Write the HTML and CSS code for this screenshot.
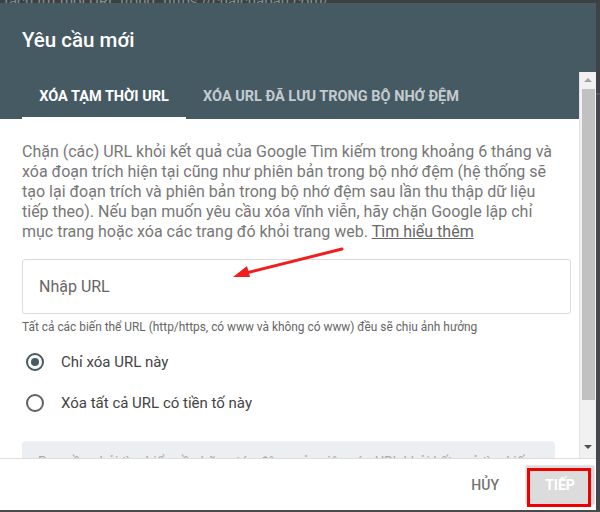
FILE: index.html
```html
<!DOCTYPE html>
<html lang="vi">
<head>
<meta charset="utf-8">
<title>Yêu cầu mới</title>
<link rel="stylesheet" href="styles.css">
</head>
<body>
<div class="backdrop-text">tách trừ mọi URL trong "https://cuaicuaban.com/</div>
<div class="stage">
  <div class="dialog">
    <div class="title">Yêu cầu mới</div>
    <div class="main">
      <div class="scroll">
        <div class="tabs">
          <div class="tab active">XÓA TẠM THỜI URL</div>
          <div class="tab">XÓA URL ĐÃ LƯU TRONG BỘ NHỚ ĐỆM</div>
        </div>
        <div class="content">
          <p class="desc">Chặn (các) URL khỏi kết quả của Google Tìm kiếm trong khoảng 6 tháng và<br>xóa đoạn trích hiện tại cũng như phiên bản trong bộ nhớ đệm (hệ thống sẽ<br>tạo lại đoạn trích và phiên bản trong bộ nhớ đệm sau lần thu thập dữ liệu<br>tiếp theo). Nếu bạn muốn yêu cầu xóa vĩnh viễn, hãy chặn Google lập chỉ<br>mục trang hoặc xóa các trang đó khỏi trang web. <a class="link">Tìm hiểu thêm</a></p>
          <div class="input">Nhập URL</div>
          <div class="hint">Tất cả các biến thể URL (http/https, có www và không có www) đều sẽ chịu ảnh hưởng</div>
          <div class="radios">
            <div class="radio-row"><span class="radio checked"></span><span class="radio-label">Chỉ xóa URL này</span></div>
            <div class="radio-row"><span class="radio"></span><span class="radio-label">Xóa tất cả URL có tiền tố này</span></div>
          </div>
          <div class="info">Bạn cần phải tìm hiểu về những tác động của việc xóa URL khỏi kết quả tìm kiếm</div>
        </div>
      </div>
      <div class="scrollbar">
        <div class="sb-up"></div>
        <div class="sb-thumb"></div>
        <div class="sb-down"></div>
      </div>
    </div>
    <div class="footer">
      <button class="btn cancel">HỦY</button>
      <button class="btn next">TIẾP</button>
    </div>
  </div>
  <div class="side"></div>
</div>
<div class="bottom-edge"></div>
<svg class="arrow" width="120" height="40" viewBox="0 0 120 40">
  <line x1="112" y1="7" x2="12" y2="32" stroke="#f21d1d" stroke-width="3" stroke-linecap="round"/>
  <polygon points="3,35 17,24 20,35" fill="#f21d1d"/>
</svg>
<div class="highlight"></div>
</body>
</html>
```
FILE: styles.css
```css
html, body {
  margin: 0;
  padding: 0;
}
body {
  width: 600px;
  height: 512px;
  overflow: hidden;
  background: #3c4043;
  font-family: Roboto, "Noto Sans", "DejaVu Sans", sans-serif;
  position: relative;
}
.backdrop-text {
  height: 3px;
  overflow: hidden;
  color: #8a8e92;
  font-size: 15px;
  line-height: 3px;
  padding-left: 4px;
  background: #3c4043;
  white-space: nowrap;
}
.stage {
  display: flex;
  height: 507px;
}
.dialog {
  width: 596px;
  height: 507px;
  background: #fff;
  display: flex;
  flex-direction: column;
  overflow: hidden;
}
.side {
  flex: 1;
  background: linear-gradient(#3f4347 0 90px, #55595d 90px 92px, #44484c 92px);
}
.title {
  height: 69px;
  background: #465a64;
  color: #fff;
  font-size: 20.5px;
  font-weight: 500;
  padding-left: 22px;
  box-sizing: border-box;
  padding-top: 25px;
  line-height: 24px;
}
.main {
  display: flex;
  height: 386px;
}
.scroll {
  flex: 1;
  overflow: hidden;
}
.tabs {
  height: 47px;
  background: #465a64;
  display: flex;
  padding-left: 22px;
  box-sizing: border-box;
}
.tab {
  font-size: 14.5px;
  font-weight: 700;
  color: #c3cbcf;
  padding: 16px 16px 0 17px;
  box-sizing: border-box;
  height: 47px;
  line-height: 17px;
  white-space: nowrap;
}
.tab.active {
  color: #fff;
  border-bottom: 2px solid #fff;
  height: 47px;
  width: 164px;
  text-align: center;
  padding-left: 0;
  padding-right: 0;
}
.content {
  padding: 23px 8px 0 22px;
}
.desc {
  margin: 0;
  font-size: 16px;
  line-height: 20px;
  color: #777;
  white-space: nowrap;
}
.link {
  color: #666;
  text-decoration: underline;
}
.input {
  margin-top: 17px;
  height: 55px;
  border: 1px solid #dadce0;
  border-radius: 3px;
  box-sizing: border-box;
  padding-left: 16px;
  font-size: 16px;
  color: #666;
  line-height: 53px;
}
.hint {
  margin-top: 5px;
  font-size: 11.9px;
  line-height: 16px;
  color: #666;
  white-space: nowrap;
}
.radios {
  margin-top: 6px;
}
.radio-row {
  height: 41px;
  display: flex;
  align-items: center;
}
.radio {
  width: 18px;
  height: 18px;
  border: 2px solid #616161;
  border-radius: 50%;
  box-sizing: border-box;
  margin-left: 4px;
  position: relative;
}
.radio.checked {
  border-color: #465a64;
}
.radio.checked::after {
  content: "";
  position: absolute;
  left: 3px;
  top: 3px;
  width: 8px;
  height: 8px;
  border-radius: 50%;
  background: #465a64;
}
.radio-label {
  margin-left: 17px;
  font-size: 15px;
  color: #444;
}
.info {
  margin-top: 18px;
  margin-right: 16px;
  height: 60px;
  background: #eceff1;
  border-radius: 4px;
  padding: 13px 16px 0;
  box-sizing: border-box;
  font-size: 14px;
  color: #a6abae;
  white-space: nowrap;
  overflow: hidden;
}
.scrollbar {
  width: 17px;
  background: #f1f1f1;
  border-left: 1px solid #e3e3e3;
  box-sizing: border-box;
  display: flex;
  flex-direction: column;
  align-items: center;
}
.sb-up {
  margin-top: 6px;
  width: 0;
  height: 0;
  border-left: 4px solid transparent;
  border-right: 4px solid transparent;
  border-bottom: 4px solid #a3a3a3;
}
.sb-thumb {
  margin-top: 7px;
  width: 13px;
  height: 311px;
  background: #c1c1c1;
}
.sb-down {
  margin-top: 45px;
  width: 0;
  height: 0;
  border-left: 4px solid transparent;
  border-right: 4px solid transparent;
  border-top: 4px solid #505050;
}
.footer {
  height: 52px;
  border-top: 1px solid #dedede;
  box-sizing: border-box;
  display: flex;
  justify-content: flex-end;
  align-items: center;
  padding-right: 1px;
  gap: 26px;
}
.btn {
  font-family: Roboto, "Noto Sans", sans-serif;
  font-weight: 500;
  font-size: 14px;
  border: none;
  background: none;
  padding: 0;
}
.cancel {
  color: #757575;
}
.next {
  width: 70px;
  height: 40px;
  background: #dcdcdc;
  border: 1px solid #e6e6e6;
  color: #fff;
  border-radius: 2px;
  font-weight: 700;
}
.bottom-edge {
  height: 2px;
  background: #4a4a4a;
}
.arrow {
  position: absolute;
  left: 230px;
  top: 242px;
}
.highlight {
  position: absolute;
  left: 527px;
  top: 468px;
  width: 64px;
  height: 39px;
  border: 3px solid #ee0000;
  box-sizing: border-box;
}
```
